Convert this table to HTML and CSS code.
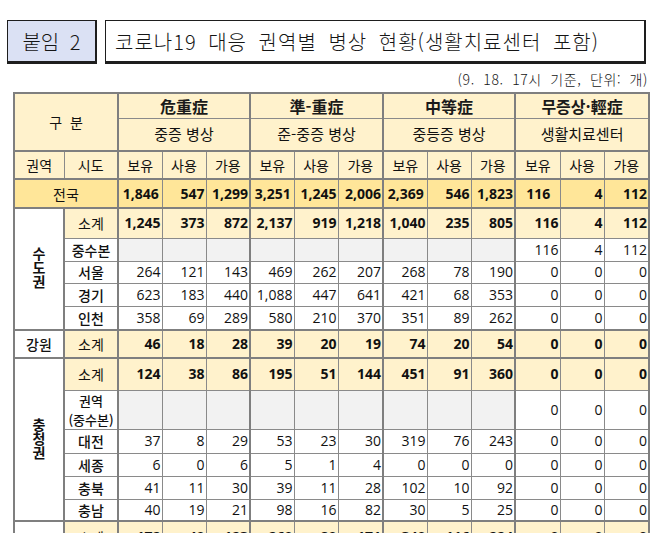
FILE: index.html
```html
<!DOCTYPE html>
<html lang="ko">
<head>
<meta charset="utf-8">
<link rel="stylesheet" href="styles.css">
</head>
<body>
<div class="page">
  <div class="titlebar">
    <div class="tag">붙임 2</div>
    <div class="title">코로나19 대응 권역별 병상 현황(생활치료센터 포함)</div>
  </div>
  <div class="note">(9. 18. 17시 기준, 단위: 개)</div>
  <table class="grid">
    <colgroup>
      <col class="w-reg"><col class="w-sido">
      <col class="w44"><col class="w44"><col class="w44">
      <col class="w44"><col class="w44"><col class="w45">
      <col class="w44"><col class="w44"><col class="w44">
      <col class="w45"><col class="w44"><col class="w45">
    </colgroup>
    <tr class="r-h1">
      <td class="hd lab" colspan="2" rowspan="2"><span class="gubun">구 분</span></td>
      <td class="hd grp gl" colspan="3">危重症</td>
      <td class="hd grp gl" colspan="3">準-重症</td>
      <td class="hd grp gl" colspan="3">中等症</td>
      <td class="hd grp gl" colspan="3">무증상·輕症</td>
    </tr>
    <tr class="r-h2">
      <td class="hd sub-h gl" colspan="3">중증 병상</td>
      <td class="hd sub-h gl" colspan="3">준-중증 병상</td>
      <td class="hd sub-h gl" colspan="3">중등증 병상</td>
      <td class="hd sub-h gl" colspan="3">생활치료센터</td>
    </tr>
    <tr class="r-h3 tt">
      <td class="hd lab">권역</td><td class="hd lab">시도</td>
      <td class="hd lab gl">보유</td><td class="hd lab">사용</td><td class="hd lab">가용</td>
      <td class="hd lab gl">보유</td><td class="hd lab">사용</td><td class="hd lab">가용</td>
      <td class="hd lab gl">보유</td><td class="hd lab">사용</td><td class="hd lab">가용</td>
      <td class="hd lab gl">보유</td><td class="hd lab">사용</td><td class="hd lab">가용</td>
    </tr>
    <tr class="r-tot tt">
      <td class="tot lab" colspan="2">전국</td>
      <td class="tot n b gl ctr">1,846</td><td class="tot n b">547</td><td class="tot n b">1,299</td>
      <td class="tot n b gl ctr">3,251</td><td class="tot n b">1,245</td><td class="tot n b">2,006</td>
      <td class="tot n b gl ctr">2,369</td><td class="tot n b">546</td><td class="tot n b">1,823</td>
      <td class="tot n b gl ctr">116</td><td class="tot n b">4</td><td class="tot n b">112</td>
    </tr>

    <tr class="r-30 tt">
      <td class="region" rowspan="5"><span class="vert">수도권</span></td>
      <td class="sub lab gl">소계</td>
      <td class="sub n b gl">1,245</td><td class="sub n b">373</td><td class="sub n b">872</td>
      <td class="sub n b gl">2,137</td><td class="sub n b">919</td><td class="sub n b">1,218</td>
      <td class="sub n b gl">1,040</td><td class="sub n b">235</td><td class="sub n b">805</td>
      <td class="sub n b gl">116</td><td class="sub n b">4</td><td class="sub n b">112</td>
    </tr>
    <tr class="r-23">
      <td class="lab sido gl">중수본</td>
      <td class="gr gl"></td><td class="gr"></td><td class="gr"></td>
      <td class="gr gl"></td><td class="gr"></td><td class="gr"></td>
      <td class="gr gl"></td><td class="gr"></td><td class="gr"></td>
      <td class="n gl">116</td><td class="n">4</td><td class="n">112</td>
    </tr>
    <tr class="r-22">
      <td class="lab sido gl">서울</td>
      <td class="n gl">264</td><td class="n">121</td><td class="n">143</td>
      <td class="n gl">469</td><td class="n">262</td><td class="n">207</td>
      <td class="n gl">268</td><td class="n">78</td><td class="n">190</td>
      <td class="n gl">0</td><td class="n">0</td><td class="n">0</td>
    </tr>
    <tr class="r-23">
      <td class="lab sido gl">경기</td>
      <td class="n gl">623</td><td class="n">183</td><td class="n">440</td>
      <td class="n gl">1,088</td><td class="n">447</td><td class="n">641</td>
      <td class="n gl">421</td><td class="n">68</td><td class="n">353</td>
      <td class="n gl">0</td><td class="n">0</td><td class="n">0</td>
    </tr>
    <tr class="r-24">
      <td class="lab sido gl">인천</td>
      <td class="n gl">358</td><td class="n">69</td><td class="n">289</td>
      <td class="n gl">580</td><td class="n">210</td><td class="n">370</td>
      <td class="n gl">351</td><td class="n">89</td><td class="n">262</td>
      <td class="n gl">0</td><td class="n">0</td><td class="n">0</td>
    </tr>

    <tr class="r-28 tt">
      <td class="region lab">강원</td>
      <td class="sub lab gl">소계</td>
      <td class="sub n b gl">46</td><td class="sub n b">18</td><td class="sub n b">28</td>
      <td class="sub n b gl">39</td><td class="sub n b">20</td><td class="sub n b">19</td>
      <td class="sub n b gl">74</td><td class="sub n b">20</td><td class="sub n b">54</td>
      <td class="sub n b gl">0</td><td class="sub n b">0</td><td class="sub n b">0</td>
    </tr>

    <tr class="r-32 tt">
      <td class="region" rowspan="6"><span class="vert">충청권</span></td>
      <td class="sub lab gl">소계</td>
      <td class="sub n b gl">124</td><td class="sub n b">38</td><td class="sub n b">86</td>
      <td class="sub n b gl">195</td><td class="sub n b">51</td><td class="sub n b">144</td>
      <td class="sub n b gl">451</td><td class="sub n b">91</td><td class="sub n b">360</td>
      <td class="sub n b gl">0</td><td class="sub n b">0</td><td class="sub n b">0</td>
    </tr>
    <tr class="r-38">
      <td class="lab sido two gl">권역<br>(중수본)</td>
      <td class="gr gl"></td><td class="gr"></td><td class="gr"></td>
      <td class="gr gl"></td><td class="gr"></td><td class="gr"></td>
      <td class="gr gl"></td><td class="gr"></td><td class="gr"></td>
      <td class="n gl">0</td><td class="n">0</td><td class="n">0</td>
    </tr>
    <tr class="r-24">
      <td class="lab sido gl">대전</td>
      <td class="n gl">37</td><td class="n">8</td><td class="n">29</td>
      <td class="n gl">53</td><td class="n">23</td><td class="n">30</td>
      <td class="n gl">319</td><td class="n">76</td><td class="n">243</td>
      <td class="n gl">0</td><td class="n">0</td><td class="n">0</td>
    </tr>
    <tr class="r-23">
      <td class="lab sido gl">세종</td>
      <td class="n gl">6</td><td class="n">0</td><td class="n">6</td>
      <td class="n gl">5</td><td class="n">1</td><td class="n">4</td>
      <td class="n gl">0</td><td class="n">0</td><td class="n">0</td>
      <td class="n gl">0</td><td class="n">0</td><td class="n">0</td>
    </tr>
    <tr class="r-23">
      <td class="lab sido gl">충북</td>
      <td class="n gl">41</td><td class="n">11</td><td class="n">30</td>
      <td class="n gl">39</td><td class="n">11</td><td class="n">28</td>
      <td class="n gl">102</td><td class="n">10</td><td class="n">92</td>
      <td class="n gl">0</td><td class="n">0</td><td class="n">0</td>
    </tr>
    <tr class="r-22">
      <td class="lab sido gl">충남</td>
      <td class="n gl">40</td><td class="n">19</td><td class="n">21</td>
      <td class="n gl">98</td><td class="n">16</td><td class="n">82</td>
      <td class="n gl">30</td><td class="n">5</td><td class="n">25</td>
      <td class="n gl">0</td><td class="n">0</td><td class="n">0</td>
    </tr>

    <tr class="r-32 tt">
      <td class="region lab"></td>
      <td class="sub lab gl">소계</td>
      <td class="sub n b gl">172</td><td class="sub n b">49</td><td class="sub n b">123</td>
      <td class="sub n b gl">260</td><td class="sub n b">89</td><td class="sub n b">171</td>
      <td class="sub n b gl">340</td><td class="sub n b">116</td><td class="sub n b">224</td>
      <td class="sub n b gl">0</td><td class="sub n b">0</td><td class="sub n b">0</td>
    </tr>
  </table>
</div>
</body>
</html>
```
FILE: styles.css
```css
html, body {
  margin: 0;
  padding: 0;
  background: #ffffff;
}

body {
  font-family: "Noto Sans CJK KR", "Noto Sans", sans-serif;
  color: #111111;
}

.page {
  width: 661px;
  overflow: hidden;
}

.titlebar {
  display: flex;
  gap: 8px;
  padding: 20px 0 0 7px;
}

.tag,
.title {
  box-sizing: border-box;
  height: 44px;
  border: 1px solid #1e1e1e;
  border-right-width: 2px;
  border-bottom-width: 3px;
  display: flex;
  align-items: center;
  font-size: 20px;
  font-weight: 300;
  word-spacing: 5px;
  color: #151515;
}

.tag {
  width: 90px;
  justify-content: center;
  background: #dbe1f4;
}

.title {
  width: 541px;
  padding-left: 9px;
  letter-spacing: 1px;
  background: #ffffff;
}

.note {
  height: 28px;
  line-height: 30px;
  text-align: right;
  padding-right: 13px;
  font-size: 14px;
  font-weight: 300;
  letter-spacing: 0.6px;
  word-spacing: 4px;
  color: #151515;
}

.grid {
  margin-left: 13px;
  width: 635px;
  table-layout: fixed;
  border-collapse: collapse;
  border: 2px solid #7f7f7f;
}

.w-reg { width: 50px; }
.w-sido { width: 54px; }
.w44 { width: 44px; }
.w45 { width: 45px; }

.grid td {
  border: 1px solid #8a8a8a;
  padding: 0 2px;
  font-size: 14px;
  line-height: 16px;
  text-align: center;
  vertical-align: middle;
  white-space: nowrap;
  overflow: hidden;
}

.grid td.gl { border-left: 2px solid #7f7f7f; }
.grid tr.tt td { border-top: 2px solid #7f7f7f; }

.r-h1 { height: 25px; }
.r-h2 { height: 33px; }
.r-h3 { height: 28px; }
.r-tot { height: 29px; }
.r-22 { height: 22px; }
.r-23 { height: 23px; }
.r-24 { height: 24px; }
.r-28 { height: 28px; }
.r-30 { height: 30px; }
.r-32 { height: 32px; }
.r-38 { height: 38px; }

.hd { background: #fff2cc; }
.tot { background: #ffe699; }
.sub { background: #fff2cc; }
.gr { background: #f2f2f2; }

.grp {
  font-size: 16px !important;
  font-weight: 700;
  color: #1a1a1a;
}

.sub-h {
  font-size: 15px !important;
}

.gubun {
  word-spacing: 4px;
}

.sido {
  font-weight: 500;
}

.grid td.two {
  font-size: 13px;
  line-height: 19px;
  padding: 0;
}

.n {
  font-family: "Open Sans", "Noto Sans CJK KR", sans-serif;
  text-align: right !important;
  padding-right: 1px !important;
  font-size: 14px;
}

.b { font-weight: 700; }

.n.ctr { text-align: center !important; }

.region {
  background: #ffffff;
  font-weight: 500;
}

.vert {
  display: inline-block;
  writing-mode: vertical-rl;
  text-orientation: upright;
  line-height: 16px;
  font-size: 14px;
  font-weight: 700;
}
```
